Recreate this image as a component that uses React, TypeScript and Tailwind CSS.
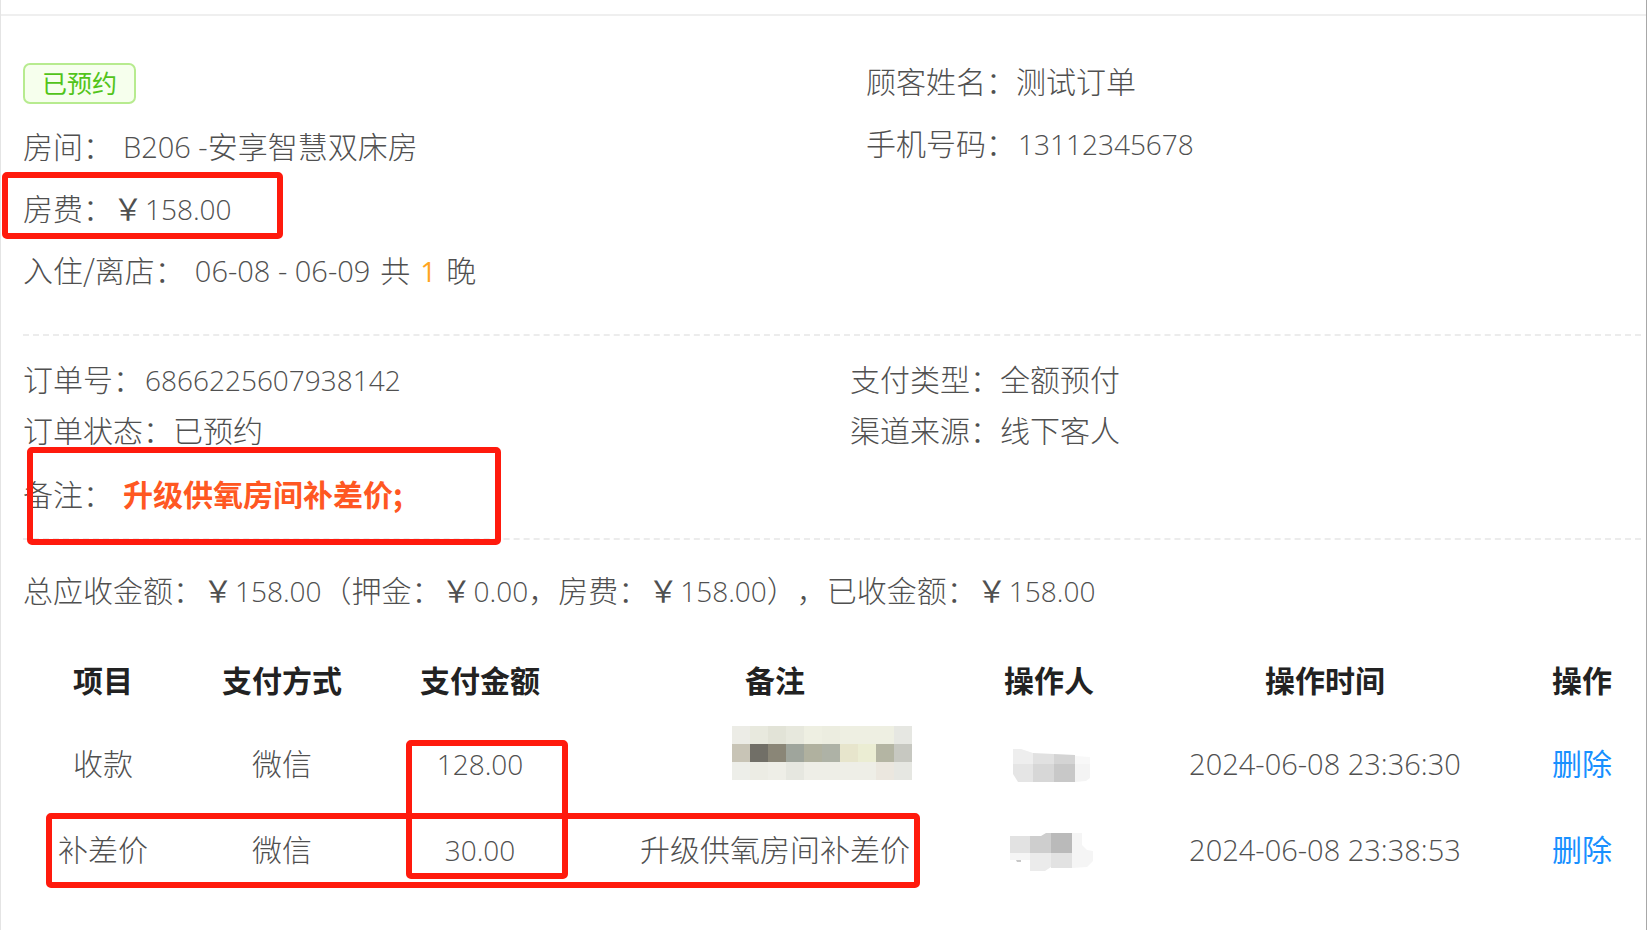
import type { ReactNode } from "react";

type Payment = {
  id: number;
  item: string;
  method: string;
  amount: string;
  remark: string;
  time: string;
};

const payments: Payment[] = [
  {
    id: 1,
    item: "收款",
    method: "微信",
    amount: "128.00",
    remark: "",
    time: "2024-06-08 23:36:30",
  },
  {
    id: 2,
    item: "补差价",
    method: "微信",
    amount: "30.00",
    remark: "升级供氧房间补差价",
    time: "2024-06-08 23:38:53",
  },
];

const mosaic = [
  ["#ecece6", "#e8e9de", "#e2e3d7", "#e7e8dd", "#eeefe2", "#ecede0", "#eeefe2", "#eeefe2", "#eeefe2", "#e6e7e2"],
  ["#c8c4b6", "#716f67", "#8a8677", "#9fa59c", "#b0b19f", "#aeb2a6", "#e7e5cc", "#ebedd3", "#b4b5a3", "#c7c8c1"],
  ["#edeee9", "#ecece4", "#eeeee7", "#e6e7e0", "#eeeee7", "#eeeee7", "#eeeee7", "#eeeee7", "#ebe7df", "#e6e7e2"],
];

function Num({ children }: { children: ReactNode }) {
  return (
    <span className="font-['Open_Sans','Noto_Sans',sans-serif] text-[28px] leading-none">
      {children}
    </span>
  );
}

// Dates and room codes are set a little larger than amounts
function Code({ children }: { children: ReactNode }) {
  return (
    <span className="font-['Open_Sans','Noto_Sans',sans-serif] text-[29px] leading-none">
      {children}
    </span>
  );
}

function Price({ value }: { value: string }) {
  return (
    <>
      <span className="mr-0.5 font-normal">￥</span>
      <Num>{value}</Num>
    </>
  );
}

// Red frame laid over the parts to look at
function Mark({ className }: { className: string }) {
  return (
    <span
      className={`pointer-events-none absolute z-10 rounded-[5px] border-6 border-[#ff1a0d] ${className}`}
    />
  );
}

function MaskedRemark() {
  return (
    <svg
      className="absolute top-[7px] left-[153px]"
      width="180"
      height="54"
      shapeRendering="crispEdges"
      aria-hidden="true"
    >
      {mosaic.map((row, y) =>
        row.map((color, x) => (
          <rect
            key={`${x}-${y}`}
            x={x * 18}
            y={y * 18}
            width="18"
            height="18"
            fill={color}
          />
        ))
      )}
    </svg>
  );
}

function MaskedOperator({ id }: { id: number }) {
  if (id === 1) {
    return (
      <svg className="mx-auto block" width="78" height="34" aria-hidden="true">
        <path d="M0 0h8l12 4v11H0z" fill="#eeeeee" />
        <path d="M20 4l21 1v10H20z" fill="#e1e1e1" />
        <path d="M41 5l21 1v9H41z" fill="#d4d4d4" />
        <path d="M62 7l15 1v7H62z" fill="#f8f8f8" />
        <path d="M0 15h20v18H5l-5-8z" fill="#e5e5e5" />
        <path d="M20 15h21v18H20z" fill="#d7d7d7" />
        <path d="M41 15h21v18H41z" fill="#c8c8c8" />
        <path d="M62 15h15v14l-4 3-11 1z" fill="#f4f4f4" />
      </svg>
    );
  }

  return (
    <svg className="mx-auto block" width="84" height="38" aria-hidden="true">
      <path d="M0 3h20v17H0z" fill="#e2e2e2" />
      <path d="M20 3l11 0 5-3h5v20H20z" fill="#cecece" />
      <path d="M41 0h21v20H41z" fill="#bababa" />
      <path d="M62 0h10v12l5 5 6 1v10l-6 6-15 1z" fill="#f5f5f5" />
      <path d="M0 20h20v7H0z" fill="#f5f5f5" />
      <path d="M6 27h5v2H7z" fill="#c8c8c8" />
      <path d="M20 20h21v14l-6 4H20z" fill="#ebebeb" />
      <path d="M41 20h21v15H41z" fill="#e2e2e2" />
    </svg>
  );
}

export default function App() {
  return (
    <div className="min-h-screen border-r border-l border-r-[#a8a8a8] border-l-[#e4e4e4] bg-white pt-3.5 font-['Noto_Sans_CJK_SC',sans-serif] text-[30px] font-light text-[#505050] [text-spacing-trim:space-all]">
      <main className="border-t-2 border-[#efefef] pr-[5px] pl-[22px]">
        {/* Guest and room */}
        <section className="grid grid-cols-[843fr_775fr] border-b-2 border-dashed border-[#ececec] pb-[34px]">
          <div className="pt-[47px] leading-[62px]">
            <span className="mb-2.5 block h-[41px] w-fit rounded-[7px] border-2 border-[#b7eb8f] bg-[#f6ffed] px-[17px] text-[25px] leading-[34px] font-normal text-[#52c41a]">
              已预约
            </span>
            <p>
              <span className="mr-2.5">房间：</span>
              <Code>B206 -</Code>安享智慧双床房
            </p>
            <p className="relative">
              房费：
              <Price value="158.00" />
              <Mark className="-top-1 -left-[21px] h-[67px] w-[281px]" />
            </p>
            <p>
              <span className="mr-2.5">入住/离店：</span>
              <Code>06-08 - 06-09</Code>
              <span className="mx-2.5">共</span>
              <span className="font-normal text-[#ffa51f]">
                <Num>1</Num>
              </span>
              <span className="ml-2.5">晚</span>
            </p>
          </div>
          <div className="pt-[33px] leading-[62px]">
            <p>顾客姓名：测试订单</p>
            <p>
              <span className="mr-0.5">手机号码：</span>
              <Num>13112345678</Num>
            </p>
          </div>
        </section>

        {/* Order */}
        <section className="grid grid-cols-[827fr_791fr] border-b-2 border-dashed border-[#ececec] pt-[17px] pb-3.5 leading-[51px]">
          <p>
            <span className="mr-0.5">订单号：</span>
            <Num>6866225607938142</Num>
          </p>
          <p>支付类型：全额预付</p>
          <p>订单状态：已预约</p>
          <p>渠道来源：线下客人</p>
          <p className="relative col-span-2 mt-[7px] leading-[62px]">
            <span className="mr-2.5">备注：</span>
            <strong className="font-bold text-[#ff5722]">升级供氧房间补差价;</strong>
            <Mark className="-top-[15px] left-1 h-[98px] w-[474px]" />
          </p>
        </section>

        <p className="pt-6 leading-[50px]">
          总应收金额：
          <Price value="158.00" />
          （押金：
          <Price value="0.00" />
          ，房费：
          <Price value="158.00" />
          ），已收金额：
          <Price value="158.00" />
        </p>

        {/* Payments */}
        <table className="mt-[25px] w-full table-fixed text-center leading-[50px]">
          <thead>
            <tr className="h-20 text-[#222]">
              <th className="w-[160px] p-0 font-bold">项目</th>
              <th className="w-[198px] p-0 font-bold">支付方式</th>
              <th className="w-[198px] p-0 font-bold">支付金额</th>
              <th className="w-[392px] p-0 font-bold">备注</th>
              <th className="w-[156px] p-0 font-bold">操作人</th>
              <th className="w-[396px] p-0 font-bold">操作时间</th>
              <th className="w-[118px] p-0 font-bold">操作</th>
            </tr>
          </thead>
          <tbody>
            {payments.map((payment) => (
              <tr key={payment.id} className="relative h-[86px]">
                <td className="p-0">
                  {payment.item}
                  {payment.id === 2 && (
                    <Mark className="top-2 left-[23px] h-[75px] w-[54%]" />
                  )}
                </td>
                <td className="p-0">{payment.method}</td>
                <td className="relative p-0">
                  <Num>{payment.amount}</Num>
                  {payment.id === 1 && (
                    <Mark className="top-[21px] left-[25px] h-[139px] w-[162px]" />
                  )}
                </td>
                <td className="relative p-0">
                  {payment.remark || <MaskedRemark />}
                </td>
                <td className="p-0 pt-2 pl-1.5">
                  <MaskedOperator id={payment.id} />
                </td>
                <td className="p-0">
                  <Code>{payment.time}</Code>
                </td>
                <td className="p-0">
                  <button type="button" className="cursor-pointer font-normal text-[#1890ff]">
                    删除
                  </button>
                </td>
              </tr>
            ))}
          </tbody>
        </table>
      </main>
    </div>
  );
}
